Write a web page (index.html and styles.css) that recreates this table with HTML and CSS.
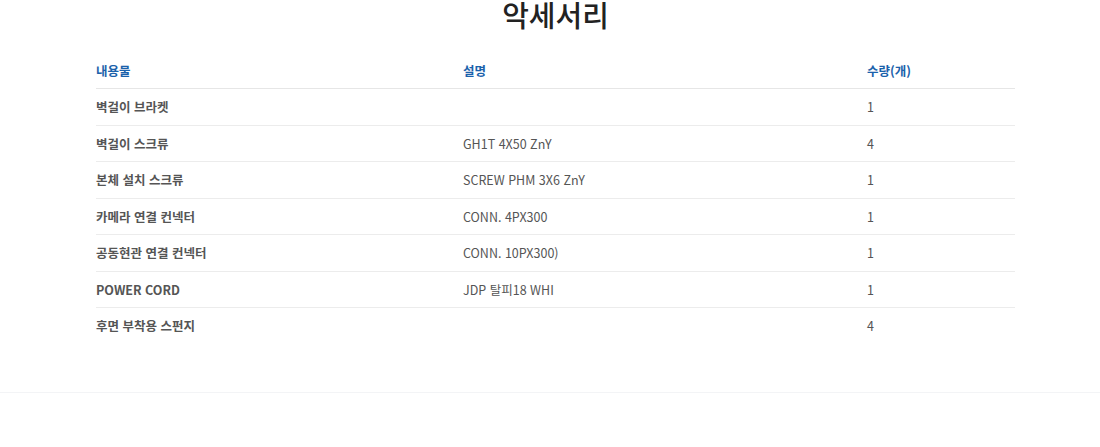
FILE: index.html
```html
<!DOCTYPE html>
<html lang="ko">
<head>
<meta charset="utf-8">
<link rel="stylesheet" href="styles.css">
</head>
<body>
<section class="acc">
  <div class="acc-inner">
    <h1 class="acc-title">악세서리</h1>
    <table class="acc-table">
      <colgroup>
        <col class="c1"><col class="c2"><col class="c3">
      </colgroup>
      <thead>
        <tr><th>내용물</th><th>설명</th><th>수량(개)</th></tr>
      </thead>
      <tbody>
        <tr><td class="name">벽걸이 브라켓</td><td></td><td>1</td></tr>
        <tr><td class="name">벽걸이 스크류</td><td>GH1T 4X50 ZnY</td><td>4</td></tr>
        <tr><td class="name">본체 설치 스크류</td><td>SCREW PHM 3X6 ZnY</td><td>1</td></tr>
        <tr><td class="name">카메라 연결 컨넥터</td><td>CONN. 4PX300</td><td>1</td></tr>
        <tr><td class="name">공동현관 연결 컨넥터</td><td>CONN. 10PX300)</td><td>1</td></tr>
        <tr><td class="name">POWER CORD</td><td>JDP 탈피18 WHI</td><td>1</td></tr>
        <tr class="last"><td class="name">후면 부착용 스펀지</td><td></td><td>4</td></tr>
      </tbody>
    </table>
  </div>
</section>
<div class="below"></div>
</body>
</html>
```

FILE: styles.css
```css
html, body {
  margin: 0;
  padding: 0;
  background: #ffffff;
  font-family: "Noto Sans CJK KR", "Noto Sans", sans-serif;
}
.acc {
  padding-bottom: 48px;
  border-bottom: 1px solid #f3f4f6;
}
.acc-inner {
  width: 919px;
  margin-left: 96px;
}
.acc-title {
  margin: 0 0 23px;
  text-align: center;
  font-size: 29px;
  line-height: 29px;
  font-weight: 500;
  color: #222;
}
.acc-table {
  width: 919px;
  margin: 0;
  border-collapse: collapse;
  table-layout: fixed;
  font-size: 12.5px;
}
.c1 { width: 367px; }
.c2 { width: 404px; }
.c3 { width: 148px; }
.acc-table th {
  text-align: left;
  font-weight: 700;
  color: #1b62ab;
  height: 36px;
  padding: 0;
  border-bottom: 1px solid #e6e6e6;
}
.acc-table td {
  height: 35.5px;
  padding: 0;
  color: #555;
  border-bottom: 1px solid #ececec;
}
.acc-table tr.last td { border-bottom: none; }
.acc-table td.name {
  font-weight: 700;
  color: #555;
}
.below {
  height: 60px;
  background: #ffffff;
}
```
